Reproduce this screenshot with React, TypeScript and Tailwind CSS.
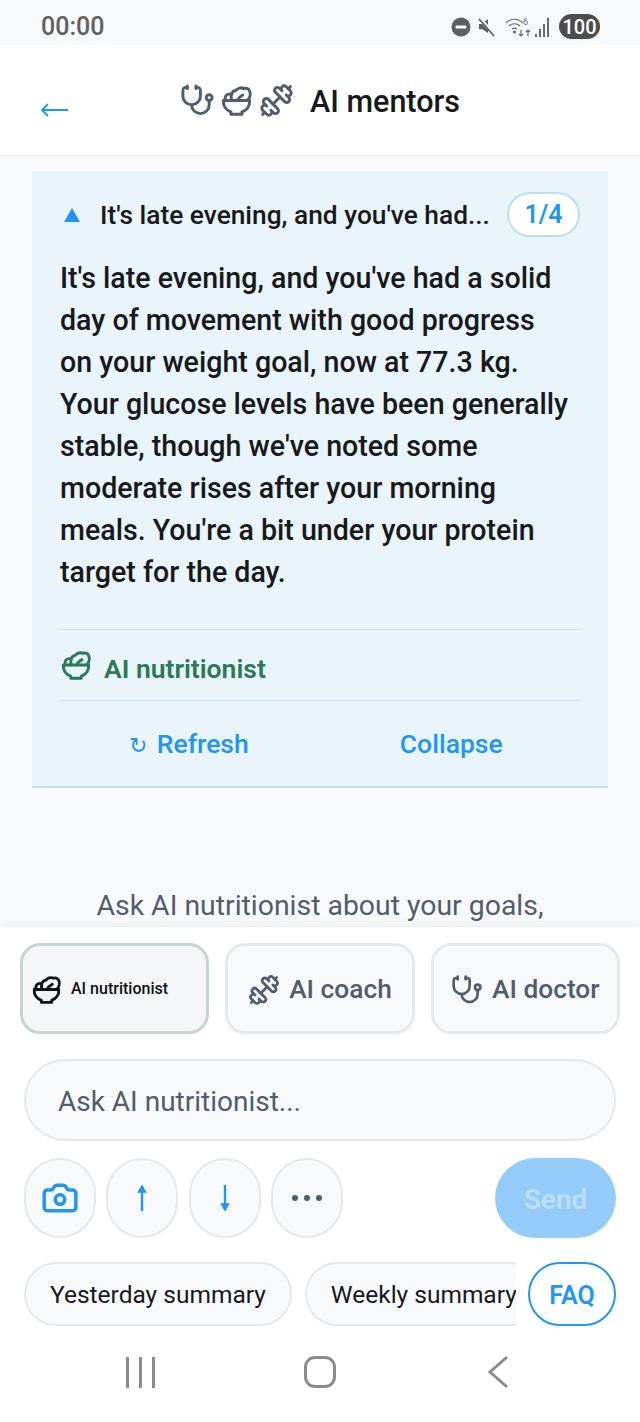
import { Camera, Dumbbell, Stethoscope } from "lucide-react";

function SaladIcon({ size, className }: { size: number; className?: string }) {
  return (
    <svg width={size} height={size} viewBox="0 0 24 24" fill="none" stroke="currentColor" strokeWidth="2.200" strokeLinecap="round" strokeLinejoin="round" className={className}>
      <path d="M2.500 12h19c.3 4-2 7.200-5.500 8.400V22H8v-1.600C4.500 19.200 2.200 16 2.500 12z" />
      <path d="M4 12C3.200 9.500 4.300 7.300 7 7.200" />
      <path d="M8.500 12C7.500 8.500 8.300 5.200 11.500 4.800 12.500 3 15.500 2.300 17.500 3.300 19.200 2.600 21 3.500 21.500 5 22.500 7 21.800 10 20 12" />
      <path d="M12.500 12c.8-1.800 2-3 4-4" />
    </svg>
  );
}

function StatusIcons() {
  return (
    <div className="flex items-center">
      <svg width="20" height="20" viewBox="0 0 20 20">
        <circle cx="10" cy="10" r="9.500" fill="#5f5f5f" />
        <rect x="4.500" y="8.500" width="11" height="3" rx="1" fill="#f8f9fb" />
      </svg>
      <svg width="20" height="20" viewBox="0 0 20 20" fill="#5f5f5f" className="ml-[6px]">
        <path d="M2 7h3l6-5v14l-6-4H2z" />
        <path d="M2 1l16 17" stroke="#f8f9fb" strokeWidth="3.500" />
        <path d="M2 2l15 17" stroke="#5f5f5f" strokeWidth="1.800" />
      </svg>
      <svg width="30" height="22" viewBox="0 0 30 22" fill="none" stroke="#6b6b6b" strokeWidth="1.200" className="ml-[8px]">
        <path d="M1 7c5-5 12-5 17 0M4 10c3-3 8-3 11 0M7 13c2-1.500 3-1.500 5 0" />
        <circle cx="9.500" cy="16" r="1" fill="#6b6b6b" />
        <path d="M16 14v6m-2-2l2 2 2-2M23 20v-6m-2 2l2-2 2 2" />
        <text x="18" y="9" fontSize="9" fill="#6b6b6b" stroke="none" fontFamily="Roboto, sans-serif">6</text>
      </svg>
      <div className="flex items-end gap-[2px] h-[20px]">
        <div className="w-[2px] h-[3px] bg-[#6b6b6b]" />
        <div className="w-[2px] h-[8px] bg-[#6b6b6b]" />
        <div className="w-[2px] h-[13px] bg-[#6b6b6b]" />
        <div className="w-[2px] h-[19px] bg-[#6b6b6b]" />
      </div>
      <div className="flex items-center justify-center w-[41px] h-[25px] ml-[10px] rounded-full bg-[#4d4d4d] text-white text-[20px] font-medium">
        100
      </div>
    </div>
  );
}

function CircleButton({ children }: { children: React.ReactNode }) {
  return (
    <button className="flex items-center justify-center w-[72px] h-[80px] rounded-full border-2 border-[#e7e8ea] bg-[#f8f9fb]">
      {children}
    </button>
  );
}

function MentorTab({ label, icon }: { label: string; icon: React.ReactNode }) {
  return (
    <button className="flex items-center justify-center gap-[9px] h-[91px] pt-[3px] rounded-[20px] border-[3px] border-[#e8e9eb] bg-[#f8f9fb] text-[#545c6b] text-[26.300px] font-medium">
      {icon}
      {label}
    </button>
  );
}

function ArrowGlyph({ up }: { up?: boolean }) {
  return (
    <svg width="14" height="28" viewBox="0 0 14 28" fill="none" stroke="#2196f3" strokeWidth="2.400" className={up ? "" : "rotate-180"}>
      <path d="M7 27V2" />
      <path d="M3.500 8l3.500-6 3.500 6z" fill="#2196f3" strokeWidth="1.500" />
    </svg>
  );
}

export default function App() {
  return (
    <div className="flex flex-col w-[640px] h-[1422px] overflow-hidden bg-[#f8f9fb] font-['Roboto',sans-serif] text-[#18191b]">
      <div className="flex items-center justify-between h-[45px] shrink-0 pl-[41px] pr-[40px] pt-[8px]">
        <span className="text-[25px] font-medium text-[#616161]">00:00</span>
        <StatusIcons />
      </div>

      <header className="relative flex items-center justify-center h-[111px] shrink-0 bg-white border-b border-[#eceef0]">
        <svg width="30" height="16" viewBox="0 0 30 16" fill="none" stroke="#2196f3" strokeWidth="2" className="absolute left-[40px] top-[57px]">
          <path d="M2 8h26" />
          <path d="M8 2L2 8l6 6" strokeWidth="1.800" />
        </svg>
        <div className="flex items-center text-[#545c6b]">
          <Stethoscope size={35} strokeWidth={2} />
          <SaladIcon size={33} className="ml-[5px]" />
          <Dumbbell size={35} strokeWidth={2} className="ml-[6px]" />
          <h1 className="ml-[16px] mt-[3px] text-[30.500px] font-medium text-[#18191b]">AI mentors</h1>
        </div>
      </header>

      <main className="flex-1 min-h-0 overflow-hidden px-[32px] pt-[15px]">
        <section className="bg-[#e9f4fb] border-b-2 border-[#bcdff5] px-[28px]">
          <div className="flex items-center h-[87px]">
            <svg width="16" height="14" viewBox="0 0 16 14" fill="#2196f3" className="ml-[4px] mt-[1px]">
              <path d="M8 0l8 14H0z" />
            </svg>
            <p className="flex-1 ml-[20px] mt-[2px] text-[26.300px] font-medium">It's late evening, and you've had...</p>
            <span className="flex items-center justify-center w-[73px] h-[45px] -mt-[1px] pt-[2px] rounded-full bg-white border-2 border-[#bcdff5] text-[#2196f3] text-[25px] font-semibold">
              1/4
            </span>
          </div>
          <p className="text-[28.600px] leading-[42px] font-medium -mt-[1px] pb-[36px]">
            It's late evening, and you've had a solid
            <br />
            day of movement with good progress
            <br />
            on your weight goal, now at 77.3 kg.
            <br />
            Your glucose levels have been generally
            <br />
            stable, though we've noted some
            <br />
            moderate rises after your morning
            <br />
            meals. You're a bit under your protein
            <br />
            target for the day.
          </p>
          <div className="flex items-center gap-[12px] h-[72px] border-y border-[#c9e4f6] text-[#2a7a58] text-[26.500px] font-semibold">
            <SaladIcon size={32} />
            <span className="mt-[7px]">AI nutritionist</span>
          </div>
          <div className="flex items-center h-[85px] pt-[1px] text-[#2196f3] text-[26.500px] font-medium">
            <div className="flex flex-1 basis-0 items-center justify-center gap-[10px] pr-[3px]">
              <span className="text-[22px] leading-none mt-[4px]">↻</span>
              Refresh
            </div>
            <div className="flex flex-1 basis-0 items-center justify-center pl-[2px]">Collapse</div>
          </div>
        </section>
        <p className="mt-[97px] text-center text-[28.400px] text-[#545c6b]">Ask AI nutritionist about your goals,</p>
      </main>

      <div className="shrink-0 h-[496px] bg-white border-t border-[#eceef0] shadow-[0_-4px_8px_rgba(0,0,0,0.03)] pt-[16px]">
        <div className="grid grid-cols-3 gap-[16px] px-[20px]">
          <button className="flex items-center gap-[9px] h-[91px] pt-[1px] pl-[8px] rounded-[20px] border-[3px] border-[#c6d6cf] bg-[#f4f6f8] text-[#111] text-[16px] font-medium">
            <SaladIcon size={31} className="text-[#111]" />
            AI nutritionist
          </button>
          <MentorTab label="AI coach" icon={<Dumbbell size={32} strokeWidth={2} />} />
          <MentorTab label="AI doctor" icon={<Stethoscope size={32} strokeWidth={2} />} />
        </div>

        <input
          readOnly
          placeholder="Ask AI nutritionist..."
          className="block mt-[25px] mx-[24px] w-[592px] h-[82px] pt-[2px] rounded-full border-2 border-[#e7e8ea] bg-[#f8f9fb] px-[32px] text-[28px] placeholder:text-[#545c6b]"
        />

        <div className="flex items-center justify-between mt-[17px] px-[24px]">
          <div className="flex gap-[10.400px]">
            <CircleButton>
              <Camera size={38} color="#2196f3" strokeWidth={2.200} />
            </CircleButton>
            <CircleButton>
              <ArrowGlyph up />
            </CircleButton>
            <CircleButton>
              <ArrowGlyph />
            </CircleButton>
            <CircleButton>
              <div className="flex gap-[6px]">
                <div className="w-[6px] h-[6px] rounded-full bg-[#545c6b]" />
                <div className="w-[6px] h-[6px] rounded-full bg-[#545c6b]" />
                <div className="w-[6px] h-[6px] rounded-full bg-[#545c6b]" />
              </div>
            </CircleButton>
          </div>
          <button className="w-[121px] h-[80px] pt-[3px] rounded-full bg-[#93ccf9] text-[#bcdff9] text-[28px] font-semibold">
            Send
          </button>
        </div>

        <div className="flex items-center mt-[24px] px-[24px]">
          <div className="flex gap-[13px] w-[492px] overflow-hidden">
            <span className="flex items-center shrink-0 h-[64px] pt-[3px] px-[24px] rounded-full border-2 border-[#e7e8ea] bg-[#f8f9fb] text-[24.500px]">
              Yesterday summary
            </span>
            <span className="flex items-center shrink-0 h-[64px] pt-[3px] px-[24px] rounded-full border-2 border-[#e7e8ea] bg-[#f8f9fb] text-[24.500px]">
              Weekly summary
            </span>
          </div>
          <button className="flex items-center justify-center ml-[12px] w-[88px] h-[64px] pt-[3px] rounded-full border-2 border-[#2196f3] bg-white text-[#2196f3] text-[25px] font-semibold">
            FAQ
          </button>
        </div>

        <nav className="flex items-center mt-[28px] h-[36px]">
          <div className="flex gap-[10px] ml-[126px]">
            <div className="w-[3px] h-[31px] bg-[#8c8c8c]" />
            <div className="w-[3px] h-[31px] bg-[#8c8c8c]" />
            <div className="w-[3px] h-[31px] bg-[#8c8c8c]" />
          </div>
          <div className="w-[32px] h-[32px] ml-[149px] rounded-[11px] border-[3px] border-[#8c8c8c]" />
          <svg width="24" height="34" viewBox="0 0 24 34" fill="none" stroke="#8c8c8c" strokeWidth="3" className="ml-[151px]">
            <path d="M20 2L3 17l17 15" />
          </svg>
        </nav>
      </div>
    </div>
  );
}
